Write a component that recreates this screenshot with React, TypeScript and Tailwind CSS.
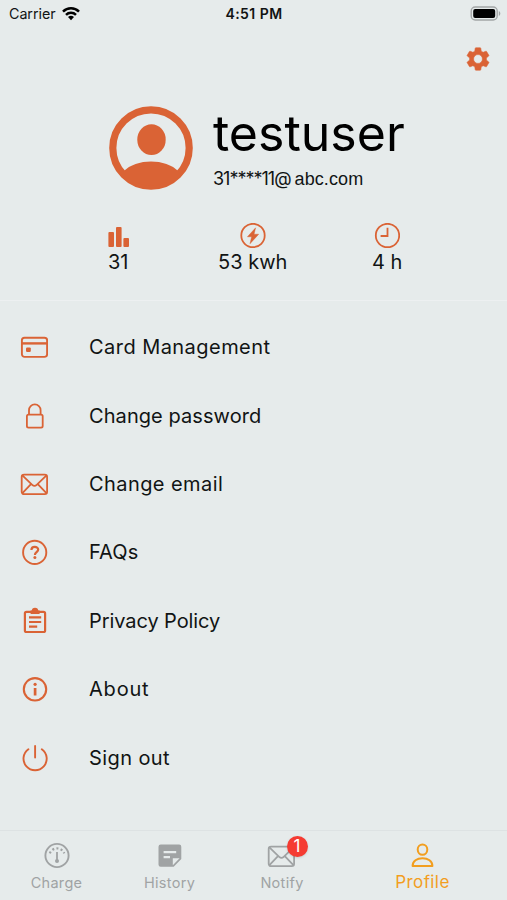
import type { ReactNode } from 'react';

const CardIcon = () => (
  <svg width="28" height="28" viewBox="0 0 28 28" fill="none" stroke="currentColor" strokeWidth="1.9">
    <rect x="1.9" y="4.7" width="25.2" height="19.2" rx="2.6" />
    <path d="M1.9 10.4h25.2" strokeWidth="2.4" />
    <rect x="6" y="14.4" width="4.8" height="4.6" rx="1.2" fill="currentColor" stroke="none" />
  </svg>
);

const LockIcon = () => (
  <svg width="28" height="28" viewBox="0 0 28 28" fill="none" stroke="currentColor" strokeWidth="1.8">
    <rect x="6.9" y="12.7" width="15.8" height="13" rx="1.6" />
    <path d="M9 12.7V8.2a5.8 5.8 0 0 1 11.6 0v4.5" />
  </svg>
);

const MailIcon = () => (
  <svg width="28" height="28" viewBox="0 0 28 28" fill="none" stroke="currentColor" strokeWidth="1.8">
    <rect x="1.7" y="4.6" width="25.4" height="19.6" rx="2.4" />
    <path d="M2.4 5.4l9.8 9.4c1.5 1.4 3 1.4 4.5 0l9.8-9.4M2.4 23.2l8.6-9M26.4 23.2l-8.6-9" />
  </svg>
);

const HelpIcon = () => (
  <svg width="28" height="28" viewBox="0 0 28 28" fill="none" stroke="currentColor" strokeWidth="1.9">
    <circle cx="14.7" cy="14.4" r="11.6" />
    <path d="M11.4 12c0-4.1 6.8-4 6.8-.4 0 2.5-3.3 2.7-3.3 5.3" strokeWidth="2.2" />
    <circle cx="14.9" cy="19.5" r="1.5" fill="currentColor" stroke="none" />
  </svg>
);

const ClipboardIcon = () => (
  <svg width="28" height="28" viewBox="0 0 28 28" fill="none" stroke="currentColor" strokeWidth="2.2">
    <rect x="4.9" y="4.8" width="20.2" height="20.2" rx="1.6" />
    <path d="M10.6 5.2h9" strokeWidth="3.6" />
    <path d="M11.8 4a3.2 3.2 0 0 1 6.4 0z" fill="currentColor" stroke="none" />
    <path d="M9 10.4h12.2M9 15h12.2M9 19.6h8.2" />
  </svg>
);

const InfoIcon = () => (
  <svg width="28" height="28" viewBox="0 0 28 28" fill="none" stroke="currentColor" strokeWidth="2.1">
    <circle cx="15" cy="14.3" r="11.2" />
    <path d="M15.1 13v7.5" strokeWidth="2.7" />
    <circle cx="15.1" cy="9.3" r="1.6" fill="currentColor" stroke="none" />
  </svg>
);

const PowerIcon = () => (
  <svg width="28" height="28" viewBox="0 0 28 28" fill="none" stroke="currentColor" strokeWidth="1.9" strokeLinecap="round">
    <path d="M8.4 5.2a11.6 11.6 0 1 0 13.4 0M15.1 2v11.5" />
  </svg>
);

const GaugeIcon = () => (
  <svg width="28" height="28" viewBox="0 0 28 28" fill="none" stroke="currentColor" strokeWidth="1.9">
    <circle cx="14" cy="13.5" r="11.6" />
    <path d="M6.8 11.3a7.7 7.7 0 0 1 14.4 0" strokeWidth="2.2" strokeDasharray="2 2.3" />
    <path d="M14 10v8" strokeWidth="1.8" />
    <circle cx="14" cy="19" r="2" fill="currentColor" stroke="none" />
  </svg>
);

const NoteIcon = () => (
  <svg width="28" height="28" viewBox="0 0 28 28" fill="currentColor">
    <path
      fillRule="evenodd"
      d="M4.7 2.6h18.4a2.2 2.2 0 0 1 2.2 2.2V17l-7.6 7.8h-13a2.2 2.2 0 0 1-2.2-2.2V4.8a2.2 2.2 0 0 1 2.2-2.2zM7.6 8.9v2.4h12.6V8.9zM7.6 13.9v2.4h6.4v-2.4zM16.8 23.2l6.8-7h-6.8z"
    />
  </svg>
);

const PersonIcon = () => (
  <svg width="28" height="28" viewBox="0 0 28 28" fill="none" stroke="currentColor" strokeWidth="2">
    <ellipse cx="13.5" cy="7.6" rx="4.8" ry="5.2" />
    <path d="M3.6 24c0-5 4.4-7.8 9.9-7.8s9.9 2.8 9.9 7.8z" strokeLinejoin="round" />
  </svg>
);

const BarsIcon = () => (
  <svg width="26" height="26" viewBox="0 0 26 26" fill="currentColor">
    <rect x="3.4" y="9" width="5.6" height="15" rx="1" />
    <rect x="11" y="4" width="5.6" height="20" rx="1" />
    <rect x="18.4" y="15" width="5.6" height="9" rx="1" />
  </svg>
);

const BoltIcon = () => (
  <svg width="26" height="26" viewBox="0 0 26 26" fill="none" stroke="currentColor" strokeWidth="1.8">
    <circle cx="13" cy="12.5" r="11.7" />
    <path d="M15.6 4.8L7.4 13.8h4.2l-1.6 7 8.7-9.6h-4.6z" fill="currentColor" stroke="currentColor" strokeWidth=".4" />
  </svg>
);

const ClockIcon = () => (
  <svg width="26" height="26" viewBox="0 0 26 26" fill="none" stroke="currentColor" strokeWidth="1.8">
    <circle cx="13.5" cy="12.5" r="11.7" />
    <path d="M13.5 4.8v8.2H6.6" />
  </svg>
);

const GearIcon = () => (
  <svg width="28" height="28" viewBox="0 0 24 24" fill="currentColor">
    <path d="M19.14 12.94c.04-.3.06-.61.06-.94s-.02-.64-.07-.94l2.03-1.58a.49.49 0 0 0 .12-.61l-1.92-3.32a.49.49 0 0 0-.59-.22l-2.39.96a7 7 0 0 0-1.62-.94l-.36-2.54a.48.48 0 0 0-.48-.41h-3.84a.48.48 0 0 0-.47.41l-.36 2.54c-.59.24-1.13.57-1.62.94l-2.39-.96a.48.48 0 0 0-.59.22L2.74 8.87a.48.48 0 0 0 .12.61l2.03 1.58a6 6 0 0 0 0 1.88l-2.03 1.58a.49.49 0 0 0-.12.61l1.92 3.32c.12.22.37.29.59.22l2.39-.96c.5.38 1.03.7 1.62.94l.36 2.54c.05.24.24.41.48.41h3.84c.24 0 .44-.17.47-.41l.36-2.54a7 7 0 0 0 1.62-.94l2.39.96c.22.08.47 0 .59-.22l1.92-3.32a.48.48 0 0 0-.12-.61zM12 15.8a3.8 3.8 0 1 1 0-7.6 3.8 3.8 0 0 1 0 7.6z" stroke="currentColor" strokeWidth=".5" />
  </svg>
);

const Avatar = () => (
  <svg width="84" height="84" viewBox="0 0 84 84" className="text-[#da6335]">
    <circle cx="42" cy="42" r="38.2" fill="none" stroke="currentColor" strokeWidth="7.2" />
    <ellipse cx="42.5" cy="33.7" rx="14.2" ry="15.4" fill="currentColor" />
    <path d="M14.5 65.5C27 52.2 57 52.2 69.5 65.5A37 37 0 0 1 42 80A37 37 0 0 1 14.5 65.5z" fill="currentColor" />
  </svg>
);

const StatusBar = () => (
  <div className="flex h-7 shrink-0 items-center pr-[5px] pl-[9px] text-[14.3px]">
    <div className="flex w-[214px] items-center gap-[6px]">
      <span className="tracking-[-0.05px]">Carrier</span>
      <svg width="18" height="14" viewBox="0 0 18 14" fill="none" stroke="#000" strokeWidth="2.5">
        <path d="M1 4.6a11.3 11.3 0 0 1 16 0" />
        <path d="M4 7.8a7.1 7.1 0 0 1 10 0" />
        <path d="M6 10.1a4.3 4.3 0 0 1 6 0L9 13.2z" fill="#000" stroke="none" />
      </svg>
    </div>
    <span className="w-[62px] text-center text-[14px] leading-[26px] font-semibold tracking-[0.45px]">4:51 PM</span>
    <div className="flex grow justify-end">
      <svg width="32" height="16" viewBox="0 0 32 16">
        <rect x="1.2" y="1" width="26" height="13" rx="4" fill="none" stroke="#a3a6a7" strokeWidth="1.4" />
        <rect x="3.2" y="3" width="22" height="9" rx="2" fill="#000" />
        <path d="M28.8 5c2 .8 2 4.2 0 5z" fill="#a3a6a7" />
      </svg>
    </div>
  </div>
);

const Stat = ({ icon, value }: { icon: ReactNode; value: string }) => (
  <div className="flex w-[134.5px] flex-col items-center">
    <span className="text-[#da6335]">{icon}</span>
    <span className="text-[20px] leading-[26px]">{value}</span>
  </div>
);

const menu = [
  { label: 'Card Management', icon: <CardIcon />, style: 'tracking-[0.45px]' },
  { label: 'Change password', icon: <LockIcon />, style: 'tracking-[0.07px]' },
  { label: 'Change email', icon: <MailIcon />, style: 'tracking-[0.42px]' },
  { label: 'FAQs', icon: <HelpIcon />, style: 'tracking-[0.1px]' },
  { label: 'Privacy Policy', icon: <ClipboardIcon />, style: 'tracking-[-0.08px]' },
  { label: 'About', icon: <InfoIcon />, style: 'tracking-[0.8px]' },
  { label: 'Sign out', icon: <PowerIcon />, style: 'tracking-[0.4px]' },
];

const TabBar = () => (
  <nav className="flex h-[70px] shrink-0 border-t border-[#dde2e3] pt-[11px] text-[14.5px] leading-[25px] text-[#a0a3a4]">
    <div className="flex w-[113px] flex-col items-center">
      <GaugeIcon />
      <span className="tracking-[0.3px]">Charge</span>
    </div>
    <div className="flex w-[113px] flex-col items-center">
      <NoteIcon />
      <span className="tracking-[0.3px]">History</span>
    </div>
    <div className="flex w-[112px] flex-col items-center">
      <div className="relative -ml-[3px]">
        <MailIcon />
        <span className="absolute -top-[6px] left-[20px] flex h-[21px] w-[21px] items-center justify-center rounded-full bg-[#f53b32] text-[17px] text-white shadow-sm">
          1
        </span>
      </div>
      <span className="tracking-[0.3px]">Notify</span>
    </div>
    <div className="flex w-[169px] flex-col items-center text-[#f29e1f]">
      <PersonIcon />
      <span className="text-[17px] leading-[25px] tracking-[0.4px]">Profile</span>
    </div>
  </nav>
);

const App = () => {
  return (
    <div className="flex h-[900px] w-[507px] flex-col overflow-hidden bg-[#e6ebeb] font-['Inter',sans-serif] text-[#111414]">
      <StatusBar />
      <div className="flex h-[78px] shrink-0 justify-end pt-[17px] pr-[15px] text-[#da6335]">
        <GearIcon />
      </div>
      <div className="flex h-[84px] shrink-0 gap-5 pl-[109px]">
        <Avatar />
        <div className="flex flex-col whitespace-nowrap">
          <h1 className="h-[64px] text-[50px] leading-[54px] text-black">testuser</h1>
          <p className="flex items-center gap-[4px] text-[18px] leading-[22px]">
            <span className="tracking-[-1px]">31****11@</span>
            <span className="font-['Liberation_Sans',sans-serif] text-[18px] tracking-[0.1px]">abc.com</span>
          </p>
        </div>
      </div>
      <div className="flex h-[111px] shrink-0 border-b border-[#edf0f1] pt-[33px] pl-[51px]">
        <Stat icon={<BarsIcon />} value="31" />
        <Stat icon={<BoltIcon />} value="53 kwh" />
        <Stat icon={<ClockIcon />} value="4 h" />
      </div>
      <ul className="flex grow flex-col pt-3">
        {menu.map((item) => (
          <li key={item.label} className="flex h-[68.4px] items-center gap-[41px] pl-5">
            <span className="w-7 text-[#da6335]">{item.icon}</span>
            <span className={`text-[20px] ${item.style}`}>{item.label}</span>
          </li>
        ))}
      </ul>
      <TabBar />
    </div>
  );
};

export default App;
